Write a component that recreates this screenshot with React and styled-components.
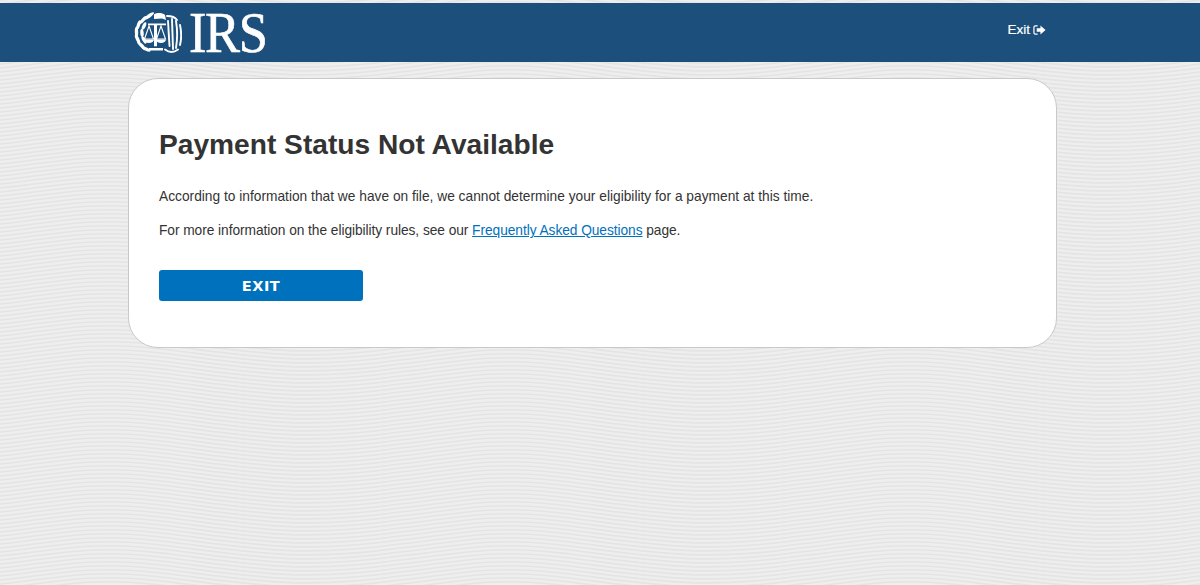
import React from 'react';
import styled, { createGlobalStyle } from 'styled-components';

const waves = encodeURIComponent(`<svg xmlns="http://www.w3.org/2000/svg" width="400" height="184">
<defs><path id="w" d="M0 0C60 -6 90 -16 170 -6S300 14 400 0" fill="none" stroke="#e4e4e4" stroke-width="1.7"/></defs>
${Array.from({ length: 58 }, (_, i) => `<use href="#w" y="${i * 4 - 24}"/>`).join('')}
</svg>`);

const GlobalStyle = createGlobalStyle`
  html, body {
    margin: 0;
    padding: 0;
  }
  body {
    min-height: 585px;
    font-family: "Liberation Sans", Arial, sans-serif;
    color: #333;
    background-color: #eeeeee;
    background-image: url("data:image/svg+xml,${waves}");
  }
`;

const Page = styled.div`
  height: 585px;
  padding-top: 3px;
  box-sizing: border-box;
  overflow: hidden;
`;

const Header = styled.header`
  height: 59px;
  background: #1c4f7c;
  padding: 0 154px 0 134px;
  display: flex;
  align-items: center;
  justify-content: space-between;
`;

const Logo = styled.div`
  display: flex;
  align-items: center;
  gap: 7px;
  color: #fff;
`;

const LogoText = styled.span`
  font-family: "Liberation Serif", "Times New Roman", serif;
  font-size: 57px;
  line-height: 42px;
  height: 42px;
  display: block;
  letter-spacing: -1.5px;
  transform: scaleX(0.92);
  transform-origin: left center;
  -webkit-text-stroke: 0.6px #fff;
`;

const ExitLink = styled.a`
  display: flex;
  align-items: center;
  gap: 3px;
  margin-top: -6px;
  color: #fff;
  font-size: 13.5px;
  line-height: 18px;
  text-decoration: none;
  -webkit-text-stroke: 0.2px #fff;
`;

const Main = styled.main`
  padding: 16px 143px 0 128px;
`;

const Card = styled.section`
  height: 270px;
  box-sizing: border-box;
  background: #fff;
  border: 1px solid #c9c9c9;
  border-radius: 30px;
  padding: 49px 30px 0;
`;

const Title = styled.h1`
  margin: 0 0 26px;
  font-size: 28.15px;
  line-height: 34px;
  font-weight: 700;
  color: #333;
`;

const Text = styled.p`
  margin: 0 0 16px;
  font-size: 13.75px;
  line-height: 18px;
  color: #333;
  letter-spacing: ${props => props.$tight ? '-0.06px' : '0'};
`;

const FaqLink = styled.a`
  color: #0071bc;
  text-decoration: underline;
`;

const ExitButton = styled.button`
  display: block;
  width: 204px;
  height: 31px;
  margin-top: 30px;
  padding: 0;
  border: 0;
  border-radius: 3px;
  background: #0071bc;
  color: #fff;
  font-family: "DejaVu Sans", Verdana, sans-serif;
  font-size: 14.500px;
  letter-spacing: 0.5px;
  font-weight: 700;
`;

// cx, cy, length, angle of each wreath leaf
const leaves = [
  [15, 4, 6, -35], [9, 8, 5, -50], [4.500, 13, 5, -70], [2.500, 20, 5, 88],
  [3.500, 27, 5, 65], [7, 33, 5, 45], [12, 37, 5, 25],
  [10, 14, 4, -65], [8, 21, 4, 85], [10, 28, 4, 60],
];

function Seal() {
  return (
    <svg width="48" height="42" viewBox="0 0 48 42" fill="none" aria-hidden="true">
      <g fill="#fff">
        {leaves.map(([cx, cy, len, angle]) => (
          <ellipse key={`${cx}-${cy}`} cx={cx} cy={cy} rx={len} ry="1.700" transform={`rotate(${angle} ${cx} ${cy})`} />
        ))}
        {/* head */}
        <path d="M20 2.500c3-2 8-2 11 .5l1 5-4-1.500-8 .5z" />
        {/* column */}
        <path d="M14 11.500h18v1.800H14zM20 13.300h3v21h-3zM15 36h14v2.500H15z" />
      </g>
      {/* scales */}
      <g stroke="#fff" strokeWidth="1.100">
        <path d="M15 14l-4.500 13h9zM27 14l-4.500 13h9z" />
      </g>
      <path d="M10 27.500h10a5 3.500 0 0 1-10 0zM22 27.500h10a5 3.500 0 0 1-10 0z" fill="#fff" />
      {/* wing feathers */}
      <g stroke="#fff" strokeWidth="1.900" strokeLinecap="round">
        <path d="M33 4c4 0 8 1 10 4" />
        <path d="M34 9l1.500 25" />
        <path d="M38 7l1 30" />
        <path d="M42 9c1.500 9 1.500 18 0 27" />
        <path d="M46 13c1.500 7 1.500 14 0 20" />
        <path d="M31 37.500c4 3 9 3 13 0" />
      </g>
    </svg>
  );
}

function ExitIcon() {
  return (
    <svg width="13" height="12" viewBox="0 0 14 12" fill="none" aria-hidden="true">
      <path d="M5 1.500H2.500A1.500 1.500 0 0 0 1 3v6a1.500 1.500 0 0 0 1.500 1.500H5" stroke="#fff" strokeWidth="1.300" />
      <path d="M4 4.200h4V1.200L13.500 6 8 10.800V7.800H4z" fill="#fff" />
    </svg>
  );
}

export default function App() {
  return (
    <Page>
      <GlobalStyle />
      <Header>
        <Logo>
          <Seal />
          <LogoText>IRS</LogoText>
        </Logo>
        <ExitLink href="#">
          Exit
          <ExitIcon />
        </ExitLink>
      </Header>
      <Main>
        <Card>
          <Title>Payment Status Not Available</Title>
          <Text>According to information that we have on file, we cannot determine your eligibility for a payment at this time.</Text>
          <Text $tight>
            For more information on the eligibility rules, see our <FaqLink href="#">Frequently Asked Questions</FaqLink> page.
          </Text>
          <ExitButton>EXIT</ExitButton>
        </Card>
      </Main>
    </Page>
  );
}
